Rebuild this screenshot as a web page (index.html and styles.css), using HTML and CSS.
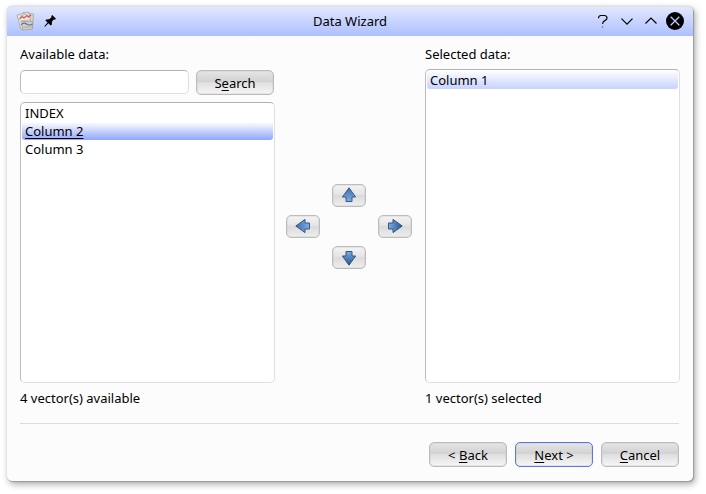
FILE: index.html
```html
<!DOCTYPE html>
<html lang="en">
<head>
<meta charset="utf-8">
<title>Data Wizard</title>
<link rel="stylesheet" href="styles.css">
</head>
<body>
<svg width="0" height="0" class="defs">
  <defs>
    <linearGradient id="blue" x1="0" y1="0" x2="0" y2="1">
      <stop offset="0" stop-color="#3f6ca4"/><stop offset=".6" stop-color="#6593cb"/><stop offset="1" stop-color="#80afe2"/>
    </linearGradient>
    <linearGradient id="blue-down" x1="0" y1="0" x2="0" y2="1">
      <stop offset="0" stop-color="#2b5490"/><stop offset=".55" stop-color="#5584be"/><stop offset="1" stop-color="#7faee2"/>
    </linearGradient>
    <symbol id="arrow" viewBox="0 0 16 16">
      <path d="M8 .8 L14.6 10 H11 V14.5 H5 V10 H1.4 Z" fill="url(#blue)" stroke="#36598a" stroke-width="1" stroke-linejoin="round"/>
    </symbol>
    <symbol id="arrow-dark" viewBox="0 0 16 16">
      <path d="M8 .8 L14.6 10 H11 V14.5 H5 V10 H1.4 Z" fill="url(#blue-down)" stroke="#31547f" stroke-width="1" stroke-linejoin="round"/>
    </symbol>
  </defs>
</svg>
<main class="window">
  <header class="titlebar">
    <svg class="app-icon" viewBox="0 0 20 20">
      <g stroke="#a3a39b" stroke-width=".8">
        <path d="M7 1.5 17.5 3 16.5 17 8 18Z" fill="#d5d5ce"/>
        <path d="M1 4 12.5 1 16 15.5 5 18.5Z" fill="#e8e8e2"/>
        <path d="M5.5 10.5 16.5 10.5 16.5 18 6.5 19.2Z" fill="#cdcfbf"/>
      </g>
      <path d="M3.5 8 6 5.5 8 7 11 4.5 12.5 6 15 4" fill="none" stroke="#df4b52" stroke-width="1.2"/>
      <path d="M5 13.8Q8 11 10.5 13T16.5 13" fill="none" stroke="#6267c9" stroke-width="1.2"/>
      <path d="M4 10 14 9M7 16.5 16 15.5M4 5 11 3" fill="none" stroke="#aaa99f" stroke-width=".7"/>
    </svg>
    <svg class="pin" viewBox="0 0 12 12"><path d="M8.2 0 12 3.8 10.7 4.7 9.8 4.5 8 6.6 7.8 9.8 6.5 10.4 4.5 8.3 1 11.8.3 11.2 3.6 7.5 1.4 5.6 2.2 4.5 5.2 4.3 7.5 2.2 7.3 1Z"/></svg>
    <h1>Data Wizard</h1>
    <svg class="controls" viewBox="0 0 90 20" fill="none" stroke="#000" stroke-width="1.15">
      <path d="M4.5 7.2Q4.5 4.7 7 4.5H10.3Q13 4.7 13 7 13 8.6 11.2 9.4 8.6 10.6 8.6 13"/><path d="M8 15.8H9.2" stroke="#596080"/>
      <path d="M27.5 7.7 33 13.2 38.5 7.7M51.5 12.5 57 7 62.5 12.5"/>
      <circle cx="81" cy="10" r="9" fill="#000" stroke="none"/>
      <path d="M76.7 5.7 85.3 14.3M85.3 5.7 76.7 14.3" stroke="#bac9ff" stroke-width="1.3"/>
    </svg>
  </header>
  <section class="content">
    <div class="pane">
      <label for="filter">Available data:</label>
      <div class="search-row"><input id="filter" type="text"><button class="btn">S<u>e</u>arch</button></div>
      <ul class="list">
        <li>INDEX</li>
        <li class="selected"><span>Column 2</span></li>
        <li>Column 3</li>
      </ul>
      <p>4 vector(s) available</p>
    </div>
    <div class="arrows">
      <button class="btn up" aria-label="Up"><svg><use href="#arrow"/></svg></button>
      <button class="btn left" aria-label="Left"><svg><use href="#arrow"/></svg></button>
      <button class="btn right" aria-label="Right"><svg><use href="#arrow-dark"/></svg></button>
      <button class="btn down" aria-label="Down"><svg><use href="#arrow-dark"/></svg></button>
    </div>
    <div class="pane chosen">
      <label>Selected data:</label>
      <ul class="list"><li class="inactive">Column 1</li></ul>
      <p>1 vector(s) selected</p>
    </div>
  </section>
  <footer>
    <button class="btn">&lt; <u>B</u>ack</button>
    <button class="btn default"><u>N</u>ext &gt;</button>
    <button class="btn"><u>C</u>ancel</button>
  </footer>
</main>
</body>
</html>
```
FILE: styles.css
```css
* { box-sizing: border-box; }
body {
  margin: 0;
  padding: 6px 13px 13px 7px;
  height: 494px;
  overflow: hidden;
  background: #fff;
  color: #000;
  font: 13px/18px "Noto Sans", sans-serif;
}
.defs { display: block; height: 0; }
.window {
  width: 686px;
  height: 475px;
  display: flex;
  flex-direction: column;
  background: #fcfcfc;
  border-radius: 5px;
  box-shadow: 0 0 1px 0 #aaa, 1px 1px 1px #999, 2px 3px 7px rgba(0, 0, 0, .36);
}
.titlebar {
  height: 30px;
  display: grid;
  grid-template-columns: 20px 12px 1fr 90px;
  align-items: center;
  padding: 0 9px 1px;
  column-gap: 8px;
  border-top: 1px solid #dfe0e6;
  border-radius: 5px 5px 0 0;
  background: linear-gradient(#e2e8ff, #adbfff);
}
.app-icon { width: 20px; height: 20px; }
.pin { width: 12px; height: 12px; }
h1 {
  margin: 0 0 0 50px;
  font-size: 13px;
  font-weight: 400;
  text-align: center;
}
.controls { width: 90px; height: 20px; }
.content {
  height: 388px;
  display: grid;
  grid-template-columns: 255px 150px 255px;
  margin: 0 14px 0 13px;
  padding-top: 9px;
  border-bottom: 1px solid #dcdcdc;
}
.pane { display: flex; flex-direction: column; height: 361px; }
label { height: 18px; margin-bottom: 7px; }
.chosen label { margin-bottom: 6px; }
.search-row {
  display: flex;
  gap: 7px;
  height: 25px;
  margin-bottom: 7px;
}
input, .list {
  border: 1px solid #dfdfdf;
  border-top-color: #b3b3b3;
  border-left-color: #bcbcbc;
  border-radius: 5px;
  background: #fff;
}
input { width: 169px; height: 24px; outline: 0; }
.list {
  flex: 1;
  margin: 0 0 6px;
  padding: 1px;
  list-style: none;
}
.list li { height: 18px; padding-left: 3px; border-radius: 3px; }
.list .selected { background: linear-gradient(#fff, #91a6fa); }
.selected span { text-decoration: underline; text-underline-offset: 2px; }
.list .inactive { background: linear-gradient(#fcfdff, #c7d2ff); }
p { margin: 0; height: 17px; }
.btn {
  width: 78px;
  height: 25px;
  padding: 0;
  border: 1px solid #bcbcbc;
  border-radius: 5px;
  background: linear-gradient(#e5e5e5, #d2d2d2 46%, #dedede 48%, #f6f6f6);
  box-shadow: inset 0 0 0 1px rgba(200, 200, 200, .35);
  color: #000;
  font: inherit;
}
u { text-underline-offset: 2px; }
.arrows {
  display: grid;
  grid-template-columns: repeat(3, 34px);
  grid-template-rows: repeat(3, 23px);
  gap: 8px 12px;
  align-self: start;
  margin: 139px 0 0 11px;
}
.arrows .btn {
  width: 34px;
  height: 23px;
  display: grid;
  place-items: center;
  background: linear-gradient(#f4f4f4, #e4e4e4 46%, #dadada 48%, #eee);
}
.arrows svg { width: 16px; height: 16px; }
.up { grid-area: 1 / 2; }
.left { grid-area: 2 / 1; }
.right { grid-area: 2 / 3; }
.down { grid-area: 3 / 2; }
.left svg { transform: rotate(-90deg); }
.right svg { transform: rotate(90deg); }
.down svg { transform: rotate(180deg); }
.arrows .up svg { margin-top: -2px; }
.arrows .left svg, .arrows .right svg { margin-top: -1px; }
footer {
  display: flex;
  justify-content: flex-end;
  gap: 8px;
  padding: 18px 14px 0 0;
}
.default { border-color: #5876e8; box-shadow: inset 0 0 0 1px rgba(190, 190, 190, .3); }
```
